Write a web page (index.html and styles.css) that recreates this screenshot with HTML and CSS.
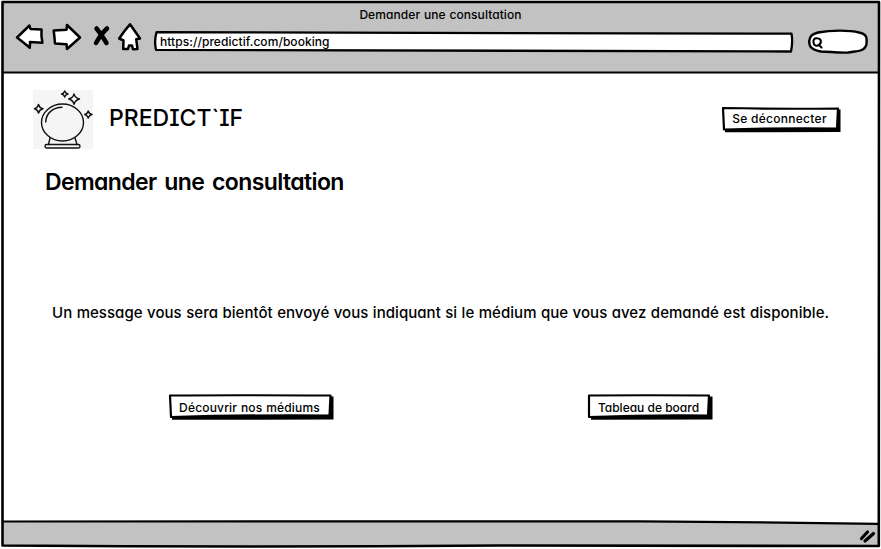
FILE: index.html
```html
<!DOCTYPE html>
<html lang="fr">
<head>
<meta charset="utf-8">
<title>Demander une consultation</title>
<link rel="stylesheet" href="styles.css">
</head>
<body>
<div class="window">
  <header class="chrome">
    <div class="window-title"><span>Demander une consultation</span></div>
    <div class="toolbar">
      <svg class="nav-icons" viewBox="0 0 130 30" width="130" height="30">
        <g fill="#fff" stroke="#000" stroke-width="2.5" stroke-linejoin="round" stroke-linecap="round">
          <path d="M2 15.500 L14.500 3.500 L15.500 7 L26.500 7.500 Q26 14 27.400 20.800 L15 20 L14.800 25.800 Q8 20 2 15.500Z"/>
          <path d="M38.700 8.500 L51.500 7.700 L52 3 L65 15.500 L52 27 L51.500 22.200 L40 21.500 Q39.500 15 38.700 8.500Z"/>
          <path d="M115 2.300 L125 16.500 L121.200 17.200 L122.500 27 L118 27.200 L117 23.500 L114 23.500 L113 27 L108.200 27 L108.500 18.500 L104.200 16.500 Q109 9 115 2.300Z"/>
        </g>
        <path d="M81.500 6.500 Q86 12 91.500 21 M92 6.500 Q86 12 81 21" fill="none" stroke="#000" stroke-width="4.500" stroke-linecap="round"/>
      </svg>
      <div class="address">
        <svg class="sketch" viewBox="0 0 641 23" width="641" height="23"><path d="M3.500 2.200 Q300 2 638.500 3.700 Q640 12 638 21.500 Q300 22 3 19.800 Q1 11 3.500 2.200Z" fill="#fff" stroke="#000" stroke-width="2.300" stroke-linejoin="round"/></svg>
        <span class="url">https://predictif.com/booking</span>
      </div>
      <svg class="search" viewBox="0 0 62 27" width="62" height="27">
        <path d="M11 4.500 C24 2 43 2 52 4.500 C60 6 60 10 59.500 16 C58 24 49 23 41 24.500 C31 25 22 23.500 14 23.500 C5 22 2 19 2.200 13 C3 8 5 6 11 4.500Z" fill="#fff" stroke="#000" stroke-width="2.400"/>
        <path d="M6.500 14.500 Q6 10 10 10.300 Q14.500 10.500 13.800 14.500 Q12 18.500 8.500 17.500 Q6.500 16.500 6.500 14.500Z M12 17 L14.500 19.500" fill="none" stroke="#000" stroke-width="2.100" stroke-linecap="round"/>
      </svg>
    </div>
  </header>

  <main class="page">
    <div class="masthead">
      <svg class="logo" viewBox="0 0 60 59" width="60" height="59">
        <rect width="60" height="59" fill="#f5f5f5"/>
        <g fill="none" stroke="#111" stroke-width="1.400" stroke-linejoin="round" stroke-linecap="round">
          <ellipse cx="29.500" cy="32.500" rx="21" ry="18.500"/>
          <path d="M12.700 32 C13 23 20 17.500 29 17.300"/>
          <path d="M17 48 L15.500 54.500 M42 48 L44 54.500"/>
          <rect x="12" y="54.500" width="35" height="3.500" rx="1.700"/>
          <path d="M5.500 14.500 Q6.500 18 10 18.800 Q6.500 19.600 5.500 23 Q4.500 19.600 1.500 18.800 Q4.500 18 5.500 14.500Z"/>
          <path d="M31.700 1 Q32.500 3.500 35 4 Q32.500 4.500 31.700 7 Q31 4.500 28.500 4 Q31 3.500 31.700 1Z"/>
          <path d="M41 4 Q42.200 8 46.500 9 Q42.200 10 41 14.300 Q40 10 35.700 9 Q40 8 41 4Z"/>
          <path d="M55.200 21 Q56 23.900 59 24.500 Q56 25.200 55.200 28 Q54.500 25.200 51.700 24.500 Q54.500 23.900 55.200 21Z"/>
        </g>
      </svg>
      <div class="brand">PREDICT`IF</div>
      <button class="btn logout">
        <svg class="sketch" viewBox="0 0 120 27" preserveAspectRatio="none"><path d="M4 5 L119.500 3.500 L119.500 26 L4 26.300Z"/><path d="M2 2 Q60 3.200 117 2.500 L116 22.500 Q60 21.800 3 23.500Z" fill="#fff" stroke="#000" stroke-width="2.200" stroke-linejoin="round"/></svg>
        <span>Se déconnecter</span>
      </button>
    </div>
    <h1>Demander une consultation</h1>
    <p class="message">Un message vous sera bientôt envoyé vous indiquant si le médium que vous avez demandé est disponible.</p>
    <div class="actions">
      <button class="btn mediums">
        <svg class="sketch" viewBox="0 0 166 27" preserveAspectRatio="none"><path d="M4 5 L165.500 3.500 L165.500 26.500 L4 26.800Z"/><path d="M2 2.500 Q60 2 162.500 2.500 L161.500 22.500 Q80 21.800 3 24Z" fill="#fff" stroke="#000" stroke-width="2.200" stroke-linejoin="round"/></svg>
        <span>Découvrir nos médiums</span>
      </button>
      <button class="btn board">
        <svg class="sketch" viewBox="0 0 126 27" preserveAspectRatio="none"><path d="M4 5 L125.500 3.500 L125.500 26.500 L4 26.800Z"/><path d="M2 2.500 Q60 2 122 2.500 L121 22.500 Q60 21.800 2 24Z" fill="#fff" stroke="#000" stroke-width="2.200" stroke-linejoin="round"/></svg>
        <span>Tableau de board</span>
      </button>
    </div>
  </main>

  <svg class="frame" viewBox="0 0 881 549" width="881" height="549">
    <path d="M2.500 521.500 Q500 520 878 523.500 L878.500 546 L2.500 546Z" fill="#c2c2c2"/>
    <g fill="none" stroke="#000" stroke-width="2.200" stroke-linejoin="round">
      <path d="M2.500 2 L879 2 L878.800 546 Q700 546.500 500 545.500 Q250 547.500 2.500 545.500Z" stroke-width="2.600"/>
      <path d="M2 72.500 L879 72.500 M2 521.500 Q300 521 640 521.300 Q760 522 878 523.800"/>
      <path d="M861.500 538.500 L867.500 532 M865 541 L873.500 533.500" stroke-width="3.200" stroke-linecap="round"/>
    </g>
  </svg>
</div>
</body>
</html>
```
FILE: styles.css
```css
* { box-sizing: border-box; }

body {
  margin: 0;
  background: #fff;
  color: #000;
  font-family: Inter, "Open Sans", sans-serif;
  font-feature-settings: "cv11", "cv08";
  font-weight: 500;
}

.window {
  position: relative;
  display: flex;
  flex-direction: column;
  width: 881px;
  height: 549px;
  overflow: hidden;
}

.frame {
  position: absolute;
  inset: 0;
  pointer-events: none;
}

.chrome {
  height: 72px;
  margin: 1px 2px 0;
  background: #c2c2c2;
}

.window-title {
  height: 20px;
  padding-top: 4px;
  font-size: 12px;
  line-height: 20px;
  letter-spacing: 0.08px;
  word-spacing: 0.5px;
  text-align: center;
}

.toolbar {
  display: flex;
  align-items: flex-start;
  padding-left: 13px;
}

.nav-icons { margin-top: 1px; }

.address {
  position: relative;
  width: 641px;
  height: 23px;
  margin: 9px 0 0 8px;
  padding-left: 7px;
  font-size: 12px;
  line-height: 23px;
  letter-spacing: 0.06px;
}

.sketch {
  position: absolute;
  top: 0;
  left: 0;
  width: 100%;
  height: 100%;
}

.address span, .btn span { position: relative; white-space: nowrap; }

.search { margin: 7px 0 0 13px; }

.page {
  flex: 1;
  display: flex;
  flex-direction: column;
}

.masthead {
  display: flex;
  align-items: flex-start;
  height: 76px;
  margin-top: 17px;
  padding: 0 40px 0 33px;
}

.brand {
  margin: 13px auto 0 16px;
  font-size: 23px;
  line-height: 30px;
}

.btn {
  position: relative;
  height: 27px;
  padding: 2px 3px 0 0;
  border: 0;
  background: none;
  color: inherit;
  font: inherit;
  font-feature-settings: inherit;
  font-size: 12px;
  line-height: 25px;
  text-align: center;
}

.logout { width: 120px; margin-top: 16px; padding: 0 3px 2px 0; letter-spacing: 0.28px; }
.mediums { width: 166px; letter-spacing: 0.18px; word-spacing: 0.4px; }

.board { width: 126px; }

h1 {
  margin: 0 0 0 45px;
  font-size: 23px;
  font-weight: 600;
  line-height: 32px;
  letter-spacing: -0.6px;
  word-spacing: 2.5px;
  white-space: nowrap;
}

.message {
  margin: 103px 0 0 52px;
  font-size: 15px;
  line-height: 24px;
  letter-spacing: 0.05px;
  word-spacing: 0.35px;
  white-space: nowrap;
}

.actions {
  display: flex;
  justify-content: space-between;
  margin: 68px 168px 0;
}
```
